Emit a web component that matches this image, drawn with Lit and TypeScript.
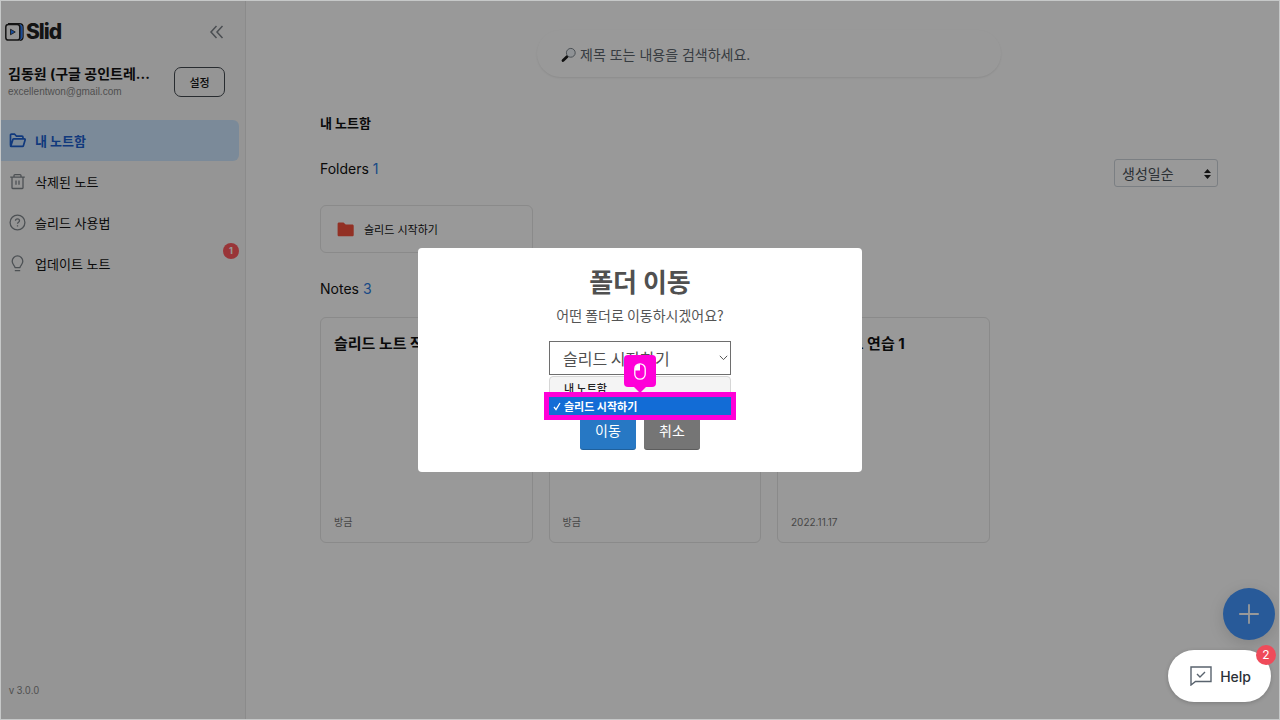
import { LitElement, html, css, svg } from "lit";
import { customElement, property, state } from "lit/decorators.js";
import { classMap } from "lit/directives/class-map.js";

const icons: Record<string, unknown> = {
  folder: svg`<path d="M1.500 13.500V3.200c0-.6.4-1 1-1h3.200l1.800 2h5.500c.6 0 1 .4 1 1v1.600M1.700 14.400 3.900 7.600c.1-.5.5-.8 1-.8h10.400c.6 0 1 .5.8 1.100l-1.700 5.800c-.1.4-.5.7-1 .7H2.100c-.4 0-.6-.3-.6-.7"/>`,
  trash: svg`<path d="M1.200 4.200h14.600M3 4.200v10.600c0 .4.3.7.7.7h9.600c.4 0 .7-.3.7-.7V4.200M5 4V2.600c0-.6.4-1 1-1h5c.6 0 1 .4 1 1V4M7 7.400v4.400M10 7.400v4.400"/>`,
  help: svg`<circle cx="8.500" cy="8.500" r="7.400"/><path d="M6.500 6.800c0-1.200.9-2 2-2s2 .8 2 1.900c0 1.400-2 1.500-2 3M8.500 11.300v1.300"/>`,
  bulb: svg`<path d="M6 12.600c0-2-2.800-3-2.800-6.400a5.300 5.300 0 0 1 10.600 0c0 3.400-2.800 4.400-2.800 6.400zM5.800 15.700h5.400"/>`,
};

@customElement("side-nav")
export class SideNav extends LitElement {
  static styles = css`
    :host {
      display: flex;
      flex-direction: column;
      box-sizing: border-box;
      width: 245px;
      flex: none;
      background: #f9f9f9;
      border-right: 1px solid #e8e8e8;
    }
    button, a { font: inherit; color: inherit; text-decoration: none; }
    .brand {
      display: flex;
      align-items: center;
      justify-content: space-between;
      height: 30px;
      padding: 16px 21px 0 4px;
    }
    .logo { display: flex; align-items: center; gap: 2px; color: #222; font-size: 21px; line-height: 30px; font-weight: 800; letter-spacing: -1px; }
    .collapse { display: flex; padding: 0; border: 0; background: none; color: #7c8288; }
    .user { display: flex; align-items: center; justify-content: space-between; padding: 17px 20px 0 7px; }
    .name { margin: 0; font-size: 14px; line-height: 20px; font-weight: 700; color: #111; white-space: nowrap; }
    .mail, .version { font-family: "Liberation Sans", Arial, sans-serif; font-size: 10px; line-height: 16px; color: #868686; }
    .mail { margin: 0; }
    .settings {
      width: 51px;
      height: 30px;
      padding: 0;
      border: 1px solid #444a50;
      border-radius: 7px;
      background: none;
      font-size: 11px;
      font-weight: 500;
    }
    nav { display: flex; flex-direction: column; margin-top: 20px; padding-right: 6px; }
    .item {
      position: relative;
      display: flex;
      align-items: center;
      gap: 9px;
      height: 41px;
      padding-left: 8px;
      border-radius: 0 6px 6px 0;
      font-size: 13px;
      line-height: 20px;
      color: #111;
    }
    .item svg { fill: none; stroke: #80878d; stroke-width: 1.3; stroke-linejoin: round; }
    .item.active { background: #cde7ff; color: #1c5fd0; font-weight: 700; }
    .item.active svg { stroke: #1c5fd0; stroke-width: 1.7; }
    .badge {
      position: absolute;
      right: 0;
      top: 0;
      width: 16px;
      line-height: 16px;
      border-radius: 8px;
      background: #ff595e;
      color: #fff;
      font-size: 9px;
      font-weight: 700;
      text-align: center;
    }
    .version { margin: auto 0 0; padding: 0 8px 20px; }
  `;

  @state() private items = [
    { icon: "folder", label: "내 노트함", active: true, badge: 0 },
    { icon: "trash", label: "삭제된 노트", active: false, badge: 0 },
    { icon: "help", label: "슬리드 사용법", active: false, badge: 0 },
    { icon: "bulb", label: "업데이트 노트", active: false, badge: 1 },
  ];

  render() {
    return html`
      <div class="brand">
        <div class="logo">
          <svg width="19" height="18" viewBox="0 0 19 18" fill="none">
            <path d="M3 .8h11.500c2 0 3.500 1.500 3.500 3.500v9.500c0 2-1.500 3.500-3.500 3.500" stroke="#222" stroke-width="1.400" />
            <path d="M15 1.800c1.400.3 2 1.200 2 2.500v9.500c0 1.300-.6 2.200-2 2.500z" fill="#2b7fff" stroke="#2b7fff" />
            <rect x=".8" y="1.400" width="14" height="15.600" rx="2.600" fill="#f9f9f9" stroke="#222" stroke-width="1.500" />
            <path d="M5.500 6.200v5.600l4.800-2.800z" fill="#2b7fff" stroke="#222" stroke-width=".8" />
          </svg>
          <span>Slid</span>
        </div>
        <button class="collapse" aria-label="접기">
          <svg width="15" height="14" viewBox="0 0 15 14" fill="none" stroke="currentColor" stroke-width="1.500"><path d="M7.500 1 2 7l5.500 6M13.500 1 8 7l5.500 6" /></svg>
        </button>
      </div>
      <div class="user">
        <div>
          <p class="name">김동원 (구글 공인트레...</p>
          <p class="mail">excellentwon@gmail.com</p>
        </div>
        <button class="settings">설정</button>
      </div>
      <nav>
        ${this.items.map(
          (i) => html`<a href="#" class=${classMap({ item: true, active: i.active })}>
            <svg width="17" height="17" viewBox="0 0 17 17">${icons[i.icon]}</svg>
            <span>${i.label}</span>
            ${i.badge ? html`<span class="badge">${i.badge}</span>` : ""}
          </a>`
        )}
      </nav>
      <p class="version">v 3.0.0</p>
    `;
  }
}

@customElement("note-board")
export class NoteBoard extends LitElement {
  static styles = css`
    :host { display: block; flex: 1; min-width: 0; box-sizing: border-box; padding: 29px 61px 0 74px; background: #fff; color: #111; }
    .search {
      display: flex;
      align-items: center;
      box-sizing: border-box;
      gap: 3px;
      max-width: 464px;
      height: 47px;
      margin: 0 auto;
      padding: 2px 24px 0;
      border-radius: 24px;
      box-shadow: 0 1px 2px rgba(0, 0, 0, 0.09);
    }
    .search input { flex: 1; min-width: 0; padding: 0; border: 0; outline: 0; background: none; font: inherit; font-size: 14px; line-height: 20px; }
    .search input::placeholder { color: #5c656d; opacity: 1; }
    h1 { margin: 36px 0 0; font-size: 13px; line-height: 20px; font-weight: 700; }
    h2 { margin: 0; font-size: 14px; line-height: 20px; font-weight: 400; }
    .count { color: #2b7be0; }
    .bar { display: flex; align-items: flex-start; justify-content: space-between; margin-top: 26px; }
    .sort { position: relative; display: flex; }
    .sort select {
      appearance: none;
      width: 104px;
      height: 28px;
      padding: 0 7px;
      border: 1px solid #ced4da;
      border-radius: 3px;
      background: none;
      color: #495057;
      font: inherit;
      font-size: 14px;
    }
    .sort svg { position: absolute; right: 7px; top: 10px; pointer-events: none; }
    .grid { display: grid; grid-template-columns: repeat(4, 1fr); gap: 16px; }
    .folders { margin-top: 18px; }
    .folder {
      display: flex;
      align-items: center;
      gap: 10px;
      box-sizing: border-box;
      height: 48px;
      padding: 0 16px;
      border: 1px solid #e6e6e6;
      border-radius: 6px;
      color: inherit;
      font-size: 11px;
      text-decoration: none;
    }
    .notes-title { margin: 26px 0 18px; }
    .note {
      display: flex;
      flex-direction: column;
      justify-content: space-between;
      box-sizing: border-box;
      height: 226px;
      padding: 16px 13px 10px;
      border: 1px solid #e6e6e6;
      border-radius: 6px;
    }
    .note h3 { margin: 0; min-height: 20px; font-size: 15px; line-height: 20px; font-weight: 700; }
    .note time { font-size: 10px; line-height: 20px; color: #777; }
  `;

  @property({ attribute: false }) notes = [
    { title: "슬리드 노트 작성", date: "방금" },
    { title: "", date: "방금" },
    { title: "슬리드 노트 연습 1", date: "2022.11.17" },
  ];

  render() {
    return html`
      <label class="search">
        <svg width="16" height="16" viewBox="0 0 16 16" fill="none">
          <path d="m6.200 9.600-4.200 4" stroke="#1c1c1c" stroke-width="2.800" stroke-linecap="round" />
          <circle cx="9.800" cy="5.800" r="4.400" fill="#eef4f8" stroke="#7d858c" stroke-width="1" />
        </svg>
        <input type="search" aria-label="검색" placeholder="제목 또는 내용을 검색하세요." />
      </label>
      <h1>내 노트함</h1>
      <div class="bar">
        <h2>Folders <span class="count">1</span></h2>
        <label class="sort">
          <select aria-label="정렬"><option>생성일순</option></select>
          <svg width="7" height="10" viewBox="0 0 7 10" fill="#222"><path d="M3.500 0 7 4H0zM3.500 10 0 6h7z" /></svg>
        </label>
      </div>
      <div class="grid folders">
        <a href="#" class="folder">
          <svg width="17" height="15" viewBox="0 0 17 15" fill="#f4503c"><path d="M2 .5h4.500l2.200 2h6.600c.8 0 1.400.6 1.400 1.400v9c0 .8-.6 1.400-1.400 1.400H2c-.8 0-1.400-.6-1.400-1.400v-11C.6 1.100 1.200.5 2 .5z" /></svg>
          <span>슬리드 시작하기</span>
        </a>
      </div>
      <h2 class="notes-title">Notes <span class="count">${this.notes.length}</span></h2>
      <div class="grid">
        ${this.notes.map((n) => html`<article class="note"><h3>${n.title}</h3><time>${n.date}</time></article>`)}
      </div>
    `;
  }
}

@customElement("move-dialog")
export class MoveDialog extends LitElement {
  static styles = css`
    :host {
      display: flex;
      flex-direction: column;
      align-items: center;
      box-sizing: border-box;
      width: 444px;
      max-width: 100%;
      padding: 15px 20px 22px;
      border-radius: 4px;
      background: #fff;
      color: #545454;
      font-family: "Noto Sans CJK KR", sans-serif;
    }
    h2 { margin: 0; font-size: 26px; line-height: 36px; font-weight: 700; color: #505050; }
    p { margin: 6px 0 16px; font-size: 14px; line-height: 20px; }
    .picker { position: relative; width: 182px; }
    select {
      display: block;
      appearance: none;
      box-sizing: border-box;
      width: 100%;
      height: 34px;
      padding: 0 13px;
      border: 1px solid #6e6e6e;
      border-radius: 0;
      background: #fff;
      color: #505050;
      font: inherit;
      font-size: 16px;
    }
    .chevron { position: absolute; right: 3px; top: 14px; pointer-events: none; }
    .menu {
      position: absolute;
      inset: 35px 0 auto;
      box-sizing: border-box;
      margin: 0;
      padding: 2px 0 0;
      border: 1px solid #d6d6d6;
      border-radius: 4px;
      background: #f4f4f4;
      color: #222;
      list-style: none;
      font-size: 11px;
      line-height: 18px;
      font-weight: 500;
    }
    .menu li { display: flex; align-items: center; padding-left: 14px; }
    .menu .chosen { position: relative; margin: 0 -1px; padding-left: 4px; gap: 3px; background: #126cd6; color: #fff; font-weight: 700; }
    .chosen::after { content: ""; position: absolute; inset: -5px; border: 5px solid #ff00d8; }
    .pointer {
      position: absolute;
      left: 75px;
      top: 14px;
      display: flex;
      align-items: center;
      justify-content: center;
      width: 32px;
      height: 32px;
      border-radius: 4px;
      background: #ff00d8;
    }
    .pointer::after { content: ""; position: absolute; top: 100%; left: 10px; border: 6px solid transparent; border-top-color: #ff00d8; border-bottom: 0; }
    .actions { display: flex; gap: 8px; margin-top: 37px; }
    .actions button { width: 56px; height: 38px; padding: 0 0 2px; border: 0; border-radius: 3px; background: #757575; color: #fff; font: inherit; font-size: 14px; box-shadow: inset 0 -1px rgba(0, 0, 0, 0.2); }
    .actions .primary { background: #2778c4; }
  `;

  render() {
    return html`
      <h2>폴더 이동</h2>
      <p>어떤 폴더로 이동하시겠어요?</p>
      <div class="picker">
        <select aria-label="폴더"><option>슬리드 시작하기</option></select>
        <svg class="chevron" width="9" height="6" viewBox="0 0 9 6" fill="none" stroke="#555"><path d="m.8.8 3.700 3.800L8.200.8" /></svg>
        <ul class="menu" role="listbox" aria-label="폴더 목록">
          <li role="option" aria-selected="false">내 노트함</li>
          <li class="chosen" role="option" aria-selected="true">
            <svg width="8" height="9" viewBox="0 0 8 9" fill="none" stroke="#fff" stroke-width="1.300"><path d="m1 5 2 2.600L7 1" /></svg>
            <span>슬리드 시작하기</span>
          </li>
        </ul>
        <div class="pointer">
          <svg width="12" height="17" viewBox="0 0 12 17" fill="none" stroke="#fff" stroke-width="1.300">
            <rect x=".8" y=".8" width="10.400" height="15.400" rx="5" /><path d="M6 1v6.500H1V5.500C1 3 3 1 6 1z" fill="#fff" stroke="none" />
          </svg>
        </div>
      </div>
      <div class="actions">
        <button class="primary">이동</button>
        <button>취소</button>
      </div>
    `;
  }
}

@customElement("app-root")
export class AppRoot extends LitElement {
  static styles = css`
    :host {
      position: relative;
      display: flex;
      box-sizing: border-box;
      min-height: 100vh;
      border: 1px solid #c6c8c8;
      overflow: hidden;
      font-family: Inter, "Noto Sans CJK KR", sans-serif;
      color: #111;
    }
    .add {
      position: absolute;
      right: 4px;
      bottom: 79px;
      display: flex;
      align-items: center;
      justify-content: center;
      width: 52px;
      height: 52px;
      padding: 0;
      border: 0;
      border-radius: 50%;
      background: #4396ff;
      box-shadow: 0 4px 16px rgba(0, 0, 0, 0.14);
    }
    .overlay {
      position: absolute;
      inset: 0;
      display: flex;
      align-items: center;
      justify-content: center;
      background: rgba(0, 0, 0, 0.4);
    }
    .help {
      position: absolute;
      right: 8px;
      bottom: 17px;
      display: flex;
      align-items: center;
      gap: 8px;
      box-sizing: border-box;
      height: 52px;
      padding: 0 20px 0 22px;
      border: 0;
      border-radius: 26px;
      background: #fff;
      color: #2a3138;
      font: inherit;
      font-size: 14px;
      font-weight: 500;
      box-shadow: 0 1px 4px rgba(0, 0, 0, 0.2);
    }
    .unread {
      position: absolute;
      right: -5px;
      top: -5px;
      width: 20px;
      border-radius: 10px;
      background: #ef4b5a;
      color: #fff;
      font-size: 12px;
      line-height: 20px;
      font-weight: 400;
    }
  `;

  render() {
    return html`
      <side-nav></side-nav>
      <note-board></note-board>
      <button class="add" aria-label="추가">
        <svg width="20" height="20" viewBox="0 0 20 20" stroke="#fff" stroke-width="1.800" stroke-linecap="round"><path d="M10 .9v18.200M.9 10h18.200" /></svg>
      </button>
      <div class="overlay"><move-dialog role="dialog" aria-label="폴더 이동"></move-dialog></div>
      <button class="help">
        <svg width="22" height="20" viewBox="0 0 22 20" fill="none" stroke="#59636e" stroke-width="1.400"><path d="M1 1h20v14.500H5.500L1 19zM7 8l3 3 5-5" /></svg>
        <span>Help</span>
        <span class="unread">2</span>
      </button>
    `;
  }
}
